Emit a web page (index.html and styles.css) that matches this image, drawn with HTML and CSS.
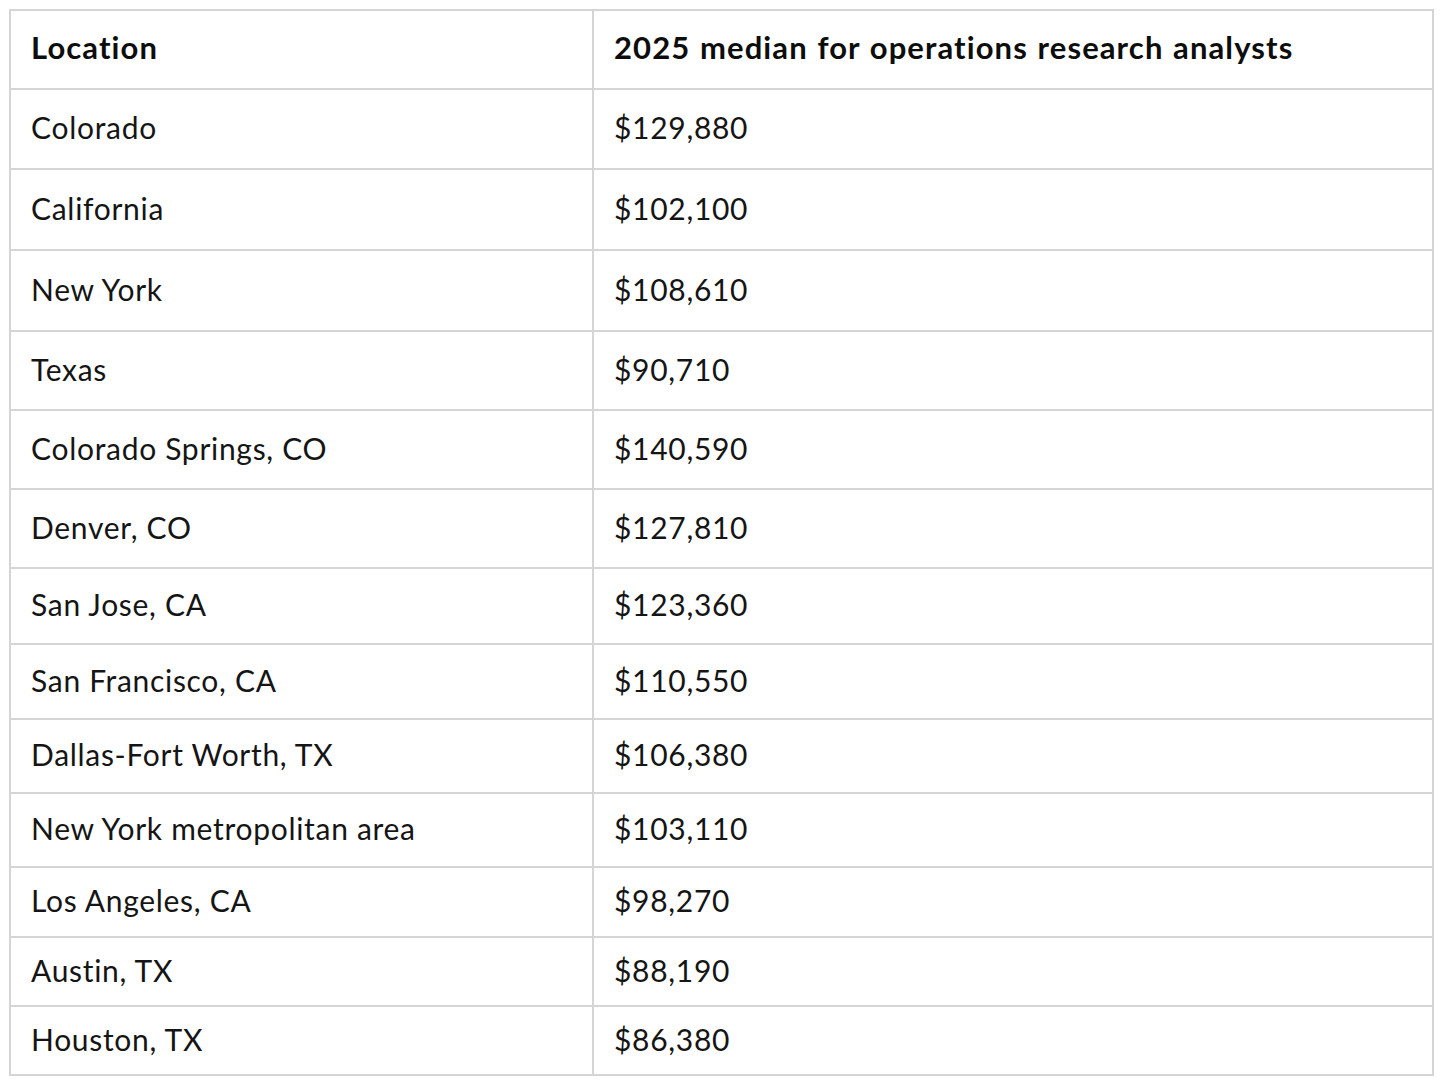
FILE: index.html
```html
<!DOCTYPE html>
<html>
<head>
<meta charset="utf-8">
<link rel="stylesheet" href="styles.css">
</head>
<body>
<table class="wage-table">
  <colgroup><col class="col-loc"><col class="col-val"></colgroup>
  <thead>
    <tr class="h79"><th>Location</th><th>2025 median for operations research analysts</th></tr>
  </thead>
  <tbody>
    <tr class="h80"><td>Colorado</td><td>$129,880</td></tr>
    <tr class="h81"><td>California</td><td>$102,100</td></tr>
    <tr class="h81"><td>New York</td><td>$108,610</td></tr>
    <tr class="h79"><td>Texas</td><td>$90,710</td></tr>
    <tr class="h79"><td>Colorado Springs, CO</td><td>$140,590</td></tr>
    <tr class="h79"><td>Denver, CO</td><td>$127,810</td></tr>
    <tr class="h76"><td>San Jose, CA</td><td>$123,360</td></tr>
    <tr class="h75"><td>San Francisco, CA</td><td>$110,550</td></tr>
    <tr class="h74"><td>Dallas-Fort Worth, TX</td><td>$106,380</td></tr>
    <tr class="h74"><td>New York metropolitan area</td><td>$103,110</td></tr>
    <tr class="h70"><td>Los Angeles, CA</td><td>$98,270</td></tr>
    <tr class="h69"><td>Austin, TX</td><td>$88,190</td></tr>
    <tr class="h69"><td>Houston, TX</td><td>$86,380</td></tr>
  </tbody>
</table>
</body>
</html>
```
FILE: styles.css
```css
html, body {
  margin: 0;
  padding: 0;
  background: #ffffff;
}
body {
  padding: 9px 0 0 9px;
  font-family: Lato, "Open Sans", sans-serif;
  color: #151515;
}
.wage-table {
  border-collapse: collapse;
  width: 1425px;
  table-layout: fixed;
  font-size: 30px;
}
.col-loc { width: 583px; }
.wage-table th,
.wage-table td {
  border: 2px solid #d5d5d5;
  padding: 0 0 4px 20px;
  text-align: left;
  vertical-align: middle;
  white-space: nowrap;
  letter-spacing: 0.7px;
}
.wage-table th {
  font-size: 31px;
  font-weight: 700;
  color: #0d0d0d;
  letter-spacing: 1.1px;
  word-spacing: 1px;
  padding-bottom: 6px;
}
.wage-table td { font-weight: 400; }
.h69 { height: 69px; }
.h70 { height: 70px; }
.h74 { height: 74px; }
.h75 { height: 75px; }
.h76 { height: 76px; }
.h79 { height: 79px; }
.h80 { height: 80px; }
.h81 { height: 81px; }
```
